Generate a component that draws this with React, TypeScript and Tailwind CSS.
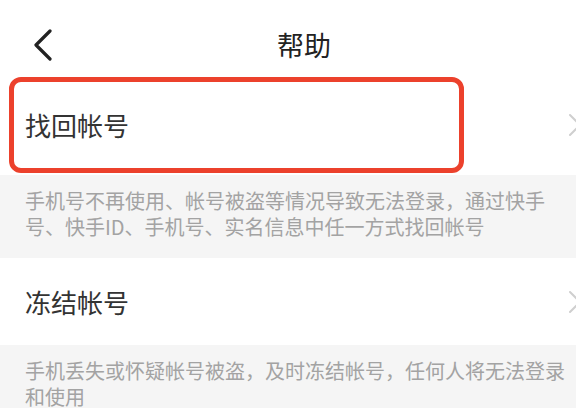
import React from "react";

function ChevronLeft() {
  return (
    <svg width="22" height="32" viewBox="0 0 22 32" fill="none">
      <path d="M19 2 L5 16 L19 30" stroke="#222" strokeWidth="3.2" strokeLinecap="round" strokeLinejoin="round" />
    </svg>
  );
}

function ChevronRight() {
  return (
    <svg width="14" height="24" viewBox="0 0 14 24" fill="none">
      <path d="M2 2 L12 12 L2 22" stroke="#cfcfcf" strokeWidth="2" strokeLinecap="round" strokeLinejoin="round" />
    </svg>
  );
}

export default function App() {
  const font = { fontFamily: '"Noto Sans CJK SC", "Noto Sans", sans-serif' };
  return (
    <div className="w-[576px] h-[408px] overflow-hidden bg-white" style={font}>
      <div className="w-[608px]">
        <header className="h-[75px] flex items-start pt-[29px] pl-[31px]">
          <ChevronLeft />
          <div className="flex-1 text-center text-[27px] leading-[32px] text-[#222] pr-[53px]">帮助</div>
        </header>

        <div className="relative h-[100px] flex items-center justify-between pl-[25px] pr-[26px]">
          <span className="text-[26px] leading-none text-[#333]">找回帐号</span>
          <ChevronRight />
          <div className="absolute left-[9px] top-[2px] w-[455px] h-[96px] border-[5px] border-[#ec412c] rounded-[12px]" />
        </div>

        <div className="bg-[#f5f5f5] pl-[25px] pr-[33px] pt-[13px] pb-[18px] text-[20px] leading-[26px] text-[#a3a3a3]">
          手机号不再使用、帐号被盗等情况导致无法登录，通过快手号、快手ID、手机号、实名信息中任一方式找回帐号
        </div>

        <div className="h-[87px] flex items-center justify-between pl-[25px] pr-[26px]">
          <span className="text-[26px] leading-none text-[#333]">冻结帐号</span>
          <ChevronRight />
        </div>

        <div className="bg-[#f5f5f5] pl-[25px] pr-[33px] pt-[13px] pb-[18px] text-[20px] leading-[26px] text-[#a3a3a3]">
          手机丢失或怀疑帐号被盗，及时冻结帐号，任何人将无法登录和使用
        </div>
      </div>
    </div>
  );
}
